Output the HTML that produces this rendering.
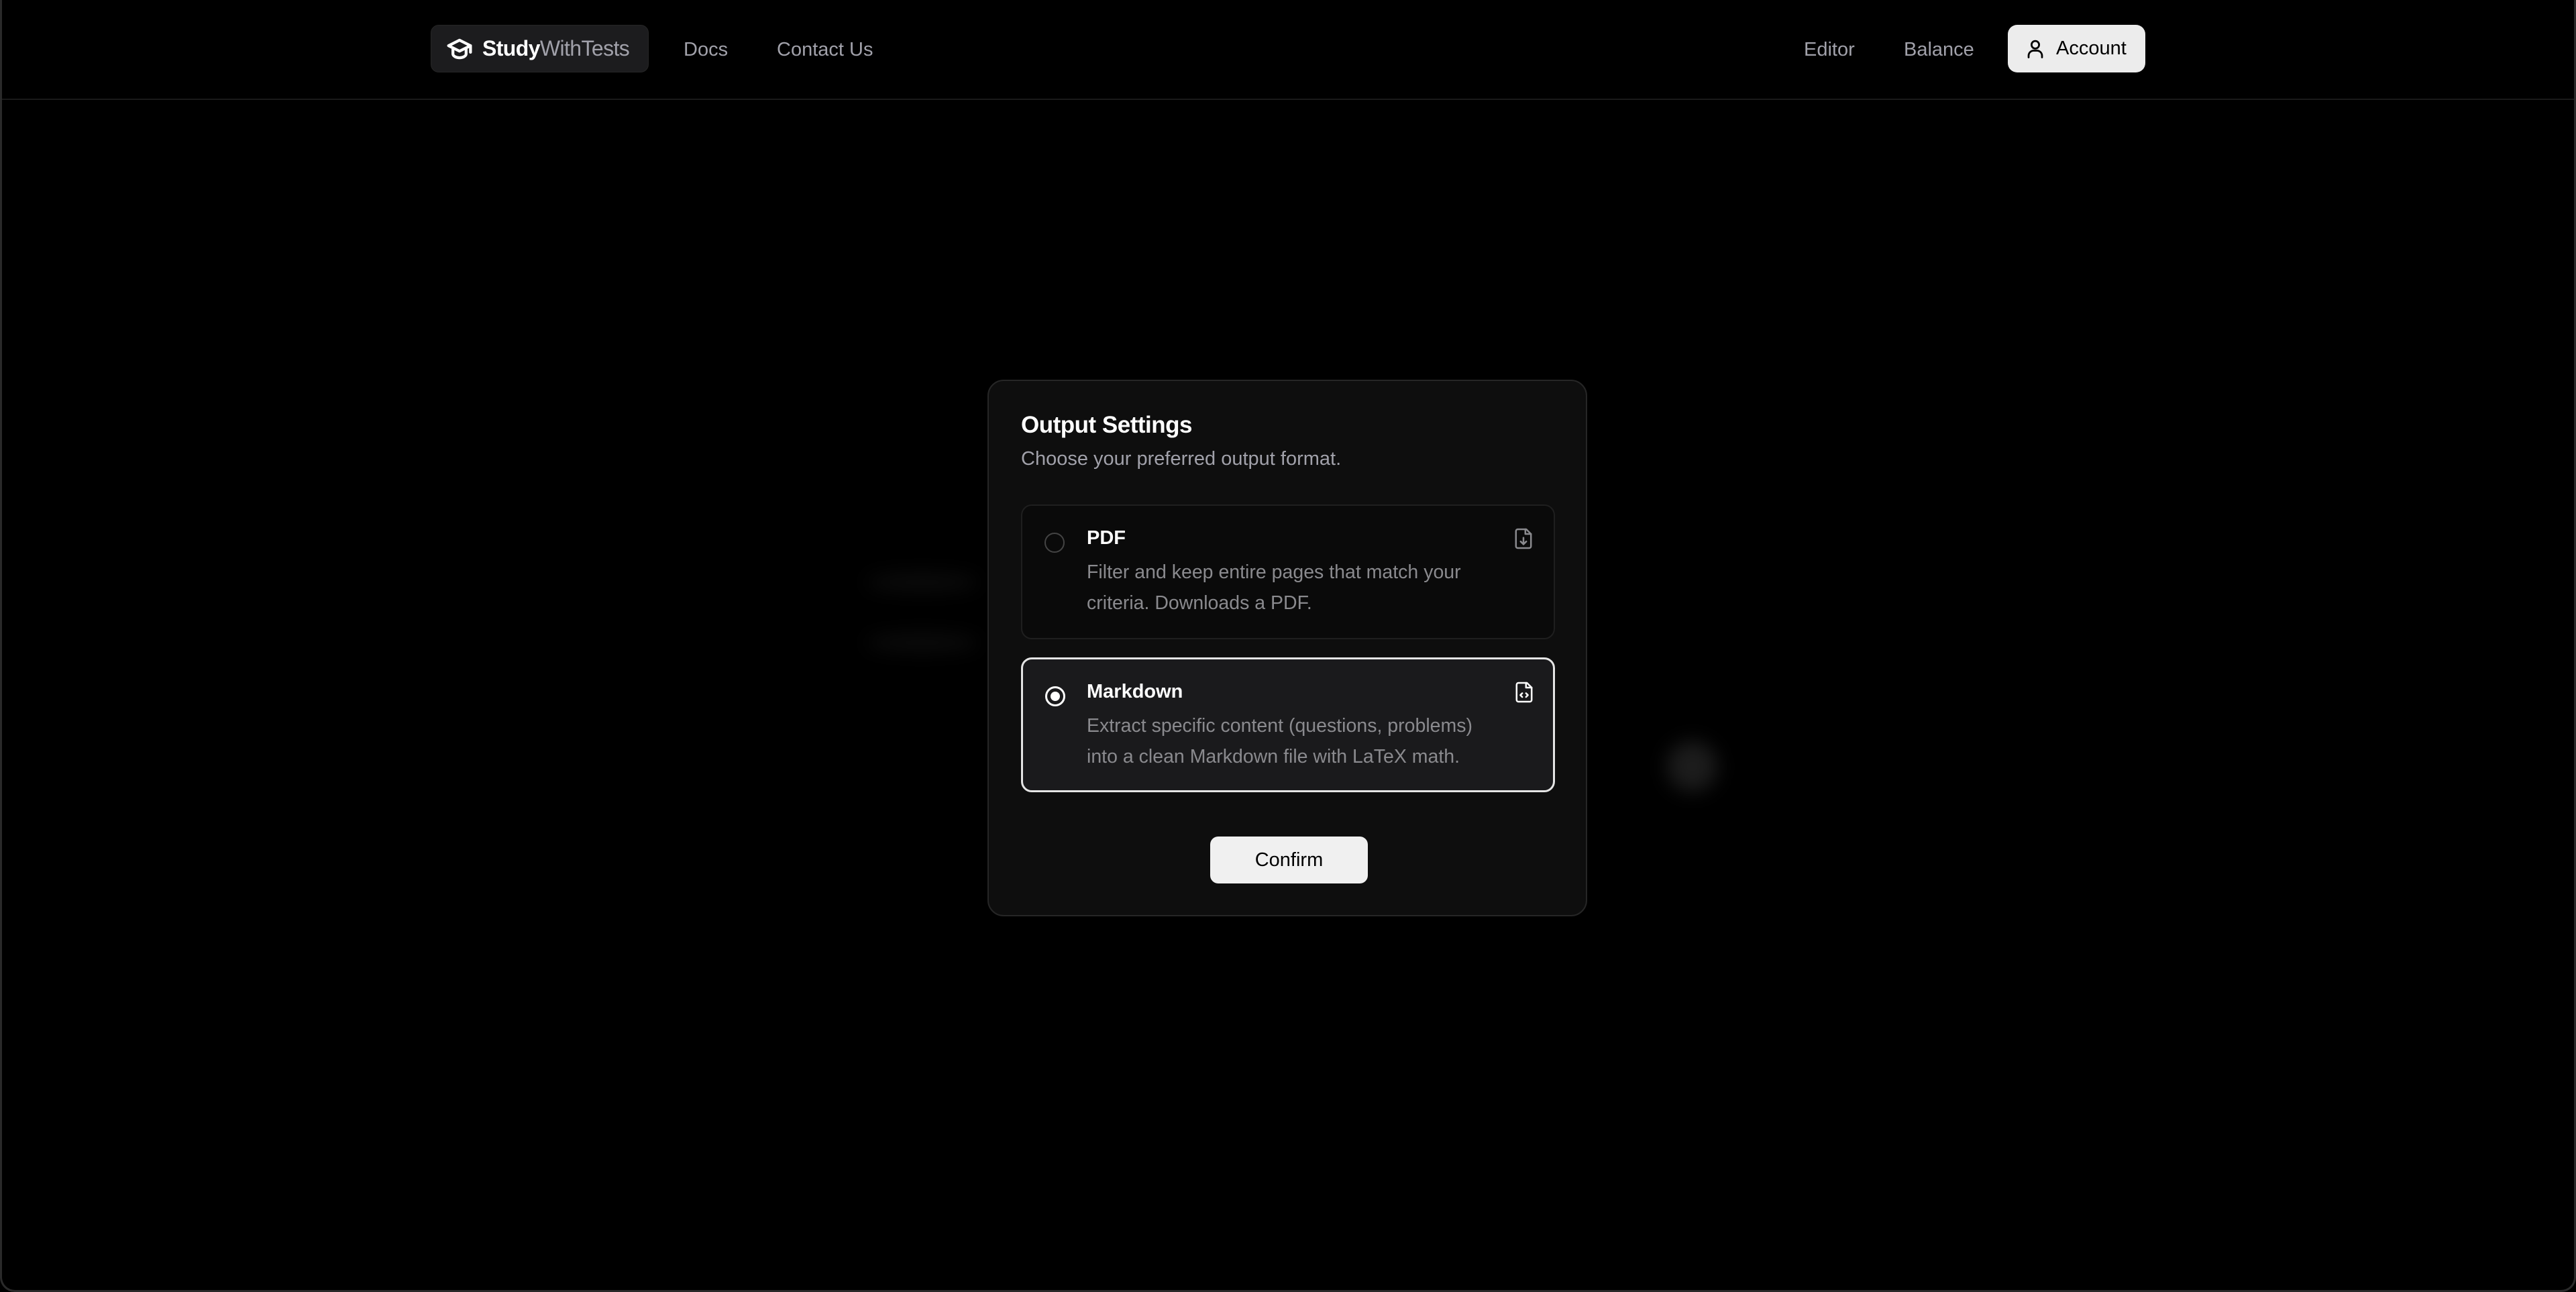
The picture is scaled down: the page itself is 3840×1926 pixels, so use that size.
<!DOCTYPE html>
<html><head><meta charset="utf-8"><style>
*{box-sizing:border-box;margin:0;padding:0}
html,body{width:3840px;height:1926px;background:#000;overflow:hidden;font-family:"Liberation Sans",sans-serif}
.frame{position:absolute;left:0;top:0;width:3840px;height:1926px;border:3px solid #2a2a2a;border-top:none;border-radius:0 0 22px 22px}
.hdr{position:absolute;left:0;top:0;width:3840px;height:149px;border-bottom:2px solid #1a1a1a}
.logo{position:absolute;left:642px;top:37px;width:325px;height:71px;background:#1c1c1e;border-radius:12px;border:1px solid #262626;display:flex;align-items:center;padding-left:22px}
.logo .t{font-size:32px;color:#fff;margin-left:14px;letter-spacing:-0.6px}
.logo b{font-weight:700}
.logo span{color:#a1a1aa}
.nav{position:absolute;top:58px;font-size:29px;color:#a1a1aa}
.acct{position:absolute;left:2993px;top:37px;width:205px;height:71px;background:#ececec;border-radius:14px;display:flex;align-items:center;padding-left:28px;font-size:29px;color:#000}
.modal{position:absolute;left:1472px;top:566px;width:894px;height:800px;background:#0e0e0e;border:2px solid #262626;border-radius:24px}
.title{position:absolute;left:48px;top:46px;font-size:35px;font-weight:700;color:#fff;letter-spacing:-0.5px}
.sub{position:absolute;left:48px;top:100px;font-size:29px;color:#a1a1aa}
.card{position:absolute;left:48px;width:796px;height:201px;border:2px solid #1f1f1f;border-radius:16px;background:#0a0a0a}
.card.sel{border:3px solid #e5e5e5;background:#1a1a1c}
.radio{position:absolute;left:33px;top:40px;width:30px;height:30px;border-radius:50%;border:2px solid #444}
.sel .radio{border:3px solid #fff}
.sel .radio:after{content:"";position:absolute;left:5px;top:5px;width:14px;height:14px;border-radius:50%;background:#fff}
.ct{position:absolute;left:96px;top:32px;font-size:29px;font-weight:600;color:#fff}
.sel .ct,.sel .cd{left:95px}
.cd{position:absolute;left:96px;top:76px;width:620px;font-size:28.5px;line-height:46px;color:#8a8a8e}
.ic{position:absolute;left:733px;top:32px}
.btn{position:absolute;left:330px;top:679px;width:235px;height:70px;background:#f0f0f0;border-radius:12px;font-size:29px;color:#000;display:flex;align-items:center;justify-content:center}
.blob{position:absolute;border-radius:50%;background:#1c1c1c;filter:blur(14px)}
</style></head><body>
<div class="blob" style="left:2485px;top:1105px;width:75px;height:75px"></div>
<div class="blob" style="left:1290px;top:855px;width:170px;height:26px;background:#0c0c0c"></div>
<div class="blob" style="left:1290px;top:945px;width:170px;height:26px;background:#0c0c0c"></div>
<div class="hdr"></div>
<div class="logo">
<svg width="40" height="36" viewBox="0 0 24 22" fill="none" stroke="#fff" stroke-width="2.6" stroke-linejoin="round" stroke-linecap="round"><path d="M2 8L12 3l10 5-10 5z"/><path d="M6 10.5v5c0 2 3 3.5 6 3.5s6-1.5 6-3.5v-5"/><path d="M22 8v6"/></svg>
<div class="t"><b>Study</b><span>WithTests</span></div></div>
<div class="nav" style="left:1019px">Docs</div>
<div class="nav" style="left:1158px">Contact Us</div>
<div class="nav" style="left:2689px">Editor</div>
<div class="nav" style="left:2838px">Balance</div>
<div class="acct"><svg width="26" height="30" viewBox="0 0 20 24" fill="none" stroke="#000" stroke-width="2.2" stroke-linecap="round"><circle cx="10" cy="7" r="4.5"/><path d="M2 22v-2a6 6 0 0 1 6-6h4a6 6 0 0 1 6 6v2"/></svg><span style="margin-left:18px">Account</span></div>
<div class="modal">
<div class="title">Output Settings</div>
<div class="sub">Choose your preferred output format.</div>
<div class="card" style="top:184px"><div class="radio"></div><div class="ct">PDF</div><div class="cd">Filter and keep entire pages that match your<br>criteria. Downloads a PDF.</div>
<svg class="ic" width="28" height="34" viewBox="0 0 20 24" fill="none" stroke="#8a8a8e" stroke-width="1.8" stroke-linejoin="round" stroke-linecap="round"><path d="M13 2H4a2 2 0 0 0-2 2v16a2 2 0 0 0 2 2h12a2 2 0 0 0 2-2V7z"/><path d="M12 2v5h6"/><path d="M10 11v7M7 15l3 3 3-3"/></svg></div>
<div class="card sel" style="top:412px"><div class="radio"></div><div class="ct">Markdown</div><div class="cd">Extract specific content (questions, problems)<br>into a clean Markdown file with LaTeX math.</div>
<svg class="ic" width="28" height="34" viewBox="0 0 20 24" fill="none" stroke="#fff" stroke-width="1.8" stroke-linejoin="round" stroke-linecap="round"><path d="M13 2H4a2 2 0 0 0-2 2v16a2 2 0 0 0 2 2h12a2 2 0 0 0 2-2V7z"/><path d="M12 2v5h6"/><path d="M8 13l-2 2 2 2M12 13l2 2-2 2"/></svg></div>
<div class="btn">Confirm</div>
</div>
<div class="frame"></div>
</body></html>
